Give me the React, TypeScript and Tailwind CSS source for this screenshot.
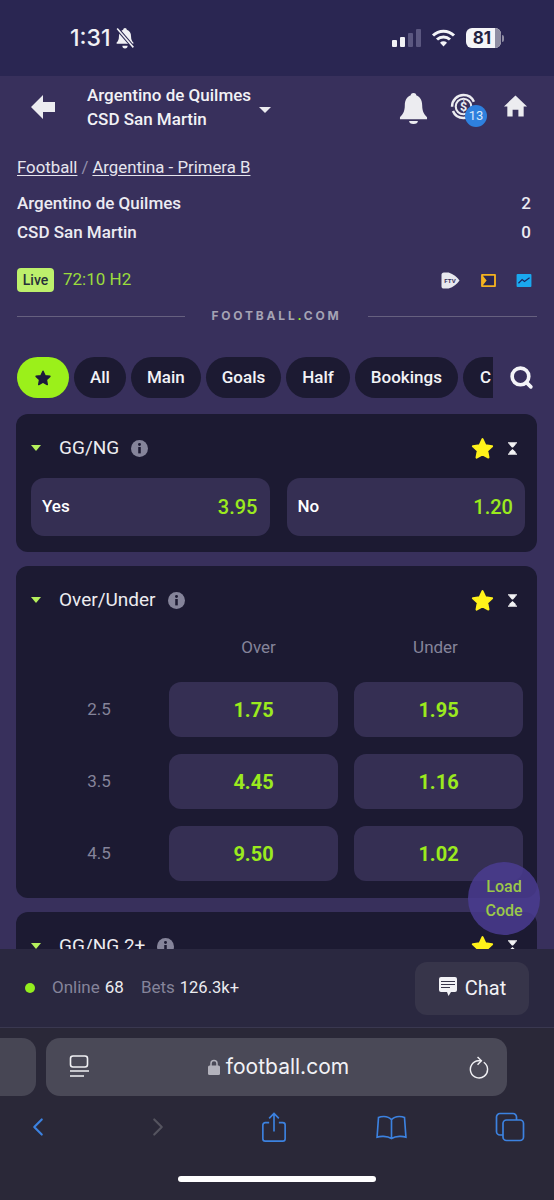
import React from 'react';
import { ChevronLeft, ChevronRight, Search } from 'lucide-react';

const tabs = ['All', 'Main', 'Goals', 'Half', 'Bookings'];

const rows = [
  { line: '2.5', over: '1.75', under: '1.95' },
  { line: '3.5', over: '4.45', under: '1.16' },
  { line: '4.5', over: '9.50', under: '1.02' },
];

const StarIcon = ({ className }: { className: string }) => (
  <svg viewBox="0 0 24 24" className={className} fill="currentColor" stroke="currentColor" strokeWidth="2" strokeLinejoin="round">
    <path d="M12 3l2.8 6 6.4.8-4.7 4.4 1.2 6.5L12 17.5l-5.7 3.2 1.2-6.5L2.8 9.8 9.2 9z" />
  </svg>
);

const InfoIcon = () => (
  <svg viewBox="0 0 16 16" className="w-[17px] h-[17px] shrink-0">
    <circle cx="8" cy="8" r="8" fill="#85849a" />
    <rect x="6.8" y="6.6" width="2.4" height="6" fill="#1c1a32" />
    <circle cx="8" cy="4.3" r="1.4" fill="#1c1a32" />
  </svg>
);

const HourGlass = () => (
  <svg viewBox="0 0 10 14" className="w-[9px] h-[13px] shrink-0" fill="#f2f2f4">
    <path d="M0 0h10v1.500H8.600v1L5.600 6H4.400L1.400 2.500v-1H0z" />
    <path d="M5 7.500l3.600 3.500v1.500H10V14H0v-1.500h1.400V11z" />
  </svg>
);

const MarketHeader = ({ title }: { title: string }) => (
  <div className="flex items-center pl-[15px] pr-[18px] pt-[4px] h-[64px]">
    <span className="w-0 h-0 border-l-[5px] border-r-[5px] border-t-[6px] border-l-transparent border-r-transparent border-t-[#b5f05c]" />
    <span className="ml-[18px] text-[19px] text-[#ececf0]">{title}</span>
    <span className="ml-[12px]"><InfoIcon /></span>
    <StarIcon className="ml-auto w-[25px] h-[25px] text-[#fff21a]" />
    <span className="ml-[13px] mr-[2px]"><HourGlass /></span>
  </div>
);

const OddButton = ({ value }: { value: string }) => (
  <button className="flex-1 h-[55px] rounded-[12px] bg-[#352f53] text-[20px] font-bold text-[#9bea1e]">{value}</button>
);

const App: React.FC = () => {
  return (
    <div className="relative flex flex-col w-[554px] h-[1200px] overflow-hidden bg-[#38305c] text-white font-['Roboto',sans-serif]">
      {/* phone status bar */}
      <div className="flex items-center h-[76px] shrink-0 bg-[#2a2652] pl-[70px] pr-[50px]">
        <span className="text-[23px] font-medium leading-none font-['Inter',sans-serif] text-[#f1f1f5]">1:31</span>
        <svg viewBox="0 0 20 22" className="w-[22px] h-[23px] ml-[3px]" fill="#f1f1f5">
          <path d="M10 1c1 0 1.600.7 1.700 1.600 2.800.8 4.100 3.200 4.100 6.400 0 3 .8 4.300 2.200 5.800v1.200H2v-1.200C3.400 13.300 4.200 12 4.200 9c0-3.200 1.300-5.600 4.100-6.400C8.400 1.700 9 1 10 1zM7.500 18h5a2.500 2.500 0 0 1-5 0z" />
          <path d="M2.500 1.500l15.500 18" stroke="#2a2652" strokeWidth="3.5" />
          <path d="M2.500 1.500l15.500 18" stroke="#f1f1f5" strokeWidth="1.5" />
        </svg>
        <div className="ml-auto flex items-end gap-[3px] h-[18px]">
          <span className="w-[5px] h-[7px] rounded-[1px] bg-[#f1f1f5]" />
          <span className="w-[5px] h-[10px] rounded-[1px] bg-[#f1f1f5]" />
          <span className="w-[5px] h-[14px] rounded-[1px] bg-[#5b5780]" />
          <span className="w-[5px] h-[18px] rounded-[1px] bg-[#5b5780]" />
        </div>
        <svg viewBox="0 0 24 18" className="w-[25px] h-[18px] ml-[10px]" fill="none" stroke="#f4f4f8" strokeWidth="3">
          <path d="M1.500 6.500a15 15 0 0 1 21 0" />
          <path d="M5.500 10.500a9.500 9.500 0 0 1 13 0" />
          <path d="M12 17.500l-3.500-3.700a5 5 0 0 1 7 0z" fill="#f4f4f8" stroke="none" />
        </svg>
        <div className="ml-[10px] flex items-center">
          <div className="relative flex items-center justify-center w-[35px] h-5 rounded-[6px] overflow-hidden bg-[#f4f4f8]">
            <span className="absolute right-0 top-0 bottom-0 w-[6px] bg-[#8f8da3]" />
            <span className="relative text-[17px] font-bold leading-none pr-[3px] font-['Inter',sans-serif] text-[#23213f]">81</span>
          </div>
          <span className="w-[2px] h-[7px] ml-[1px] rounded-r-sm bg-[#8f8da3]" />
        </div>
      </div>

      {/* match header */}
      <div className="flex items-center h-[63px] shrink-0 pl-[30px] pr-[26px]">
        <svg viewBox="0 0 26 26" className="w-[26px] h-[26px] mb-[2px]" fill="#ececf0">
          <path d="M13 1v7h12v10H13v7L1 13z" />
        </svg>
        <div className="ml-[31px] mb-[2px] w-[172px] text-[17px] font-medium leading-[24px] text-[#f2f2f6]">
          <div>Argentino de Quilmes</div>
          <div>CSD San Martin</div>
        </div>
        <span className="mt-[4px] w-0 h-0 border-l-[6px] border-r-[6px] border-t-[6px] border-l-transparent border-r-transparent border-t-[#ececf0]" />
        <svg viewBox="0 0 30 34" className="ml-auto mt-[2px] w-[29px] h-[33px]" fill="#ececf0">
          <circle cx="15" cy="4" r="3" />
          <path d="M15 3c6 0 9 4.500 9 11 0 6 2 9 5 12v2H1v-2c3-3 5-6 5-12C6 7.500 9 3 15 3z" />
          <path d="M10.500 30h9a4.500 3 0 0 1-9 0z" />
        </svg>
        <div className="relative ml-[22px] mb-[2px] w-[27px] h-[27px]">
          <svg viewBox="0 0 26 26" className="w-[27px] h-[27px]" fill="none" stroke="#ececf0">
            <circle cx="13" cy="13" r="11" strokeWidth="2.4" strokeDasharray="30 4" />
            <circle cx="13" cy="13" r="7.5" strokeWidth="2" />
            <text x="13" y="17.500" textAnchor="middle" fontSize="12" fontWeight="700" fill="#ececf0" stroke="none">$</text>
          </svg>
          <span className="absolute left-[15px] top-[12px] flex items-center justify-center w-[22px] h-[22px] rounded-full bg-[#2e80de] text-[13px] text-[#d8e8fa]">13</span>
        </div>
        <svg viewBox="0 0 26 24" className="ml-[26px] mb-[3px] w-[25px] h-[24px]" fill="#ececf0">
          <path d="M13 1L1 12.500h3.500V23H10v-7h6v7h5.500V12.500H25z" />
        </svg>
      </div>

      {/* page body */}
      <div className="flex-1 min-h-0 overflow-hidden px-[17px]">
        <div className="mt-[16px] text-[16.8px] leading-[24px] text-[#e6e5ee]">
          <span className="underline underline-offset-2">Football</span>
          <span className="mx-[4px] text-[#9491ad]">/</span>
          <span className="underline underline-offset-2">Argentina - Primera B</span>
        </div>
        <div className="mt-[10px] text-[17px] font-medium leading-[29px] text-[#ecebf2]">
          <div className="flex justify-between pr-[6px]"><span>Argentino de Quilmes</span><span>2</span></div>
          <div className="flex justify-between pr-[6px]"><span>CSD San Martin</span><span>0</span></div>
        </div>
        <div className="flex items-center mt-[21px] h-[24px]">
          <span className="flex items-center justify-center w-[37px] h-[24px] rounded-[4px] bg-[#bdf06c] text-[14px] font-medium text-[#26303a]">Live</span>
          <span className="ml-[9px] text-[17px] text-[#9bdc3c]">72:10 H2</span>
          <svg viewBox="0 0 20 20" className="ml-auto w-[19px] h-[19px]">
            <path d="M3 1.500h5c5 1.500 9 5 11.500 8.500C17 13.500 13 17 8 18.500H3c-1.500 0-2.500-1-2.500-2.500V4C.5 2.500 1.500 1.500 3 1.500z" fill="#e8e8ee" />
            <text x="9.500" y="12.500" textAnchor="middle" fontSize="6.500" fontWeight="700" fill="#38305c">FTV</text>
          </svg>
          <svg viewBox="0 0 16 14" className="ml-[21px] w-[15px] h-[13px]">
            <rect width="16" height="14" rx="1" fill="#f5b21f" />
            <path d="M2 2h12v10H2l4-5z" fill="#2a2652" />
          </svg>
          <svg viewBox="0 0 16 14" className="ml-[20px] mr-[5px] w-[16px] h-[13px]">
            <rect width="16" height="14" rx="1" fill="#1aa8ef" />
            <path d="M2 10l4-4 2.500 2L14 4" stroke="#1c2660" strokeWidth="1.3" fill="none" />
          </svg>
        </div>
        <div className="flex items-center mt-[12px] h-[24px]">
          <div className="w-[168px] h-[1px] bg-[#66607f]" />
          <div className="flex-1 text-center text-[12px] font-bold tracking-[2.8px] font-['Inter',sans-serif] text-[#a5a3b4]">
            FOOTBALL<span className="text-[#9bea1e]">.</span>COM
          </div>
          <div className="w-[169px] h-[1px] bg-[#66607f]" />
        </div>

        {/* market tabs */}
        <div className="flex items-center mt-[29px] h-[41px]">
          <div className="flex flex-1 min-w-0 gap-[5px] overflow-hidden">
            <button className="flex items-center justify-center shrink-0 w-[52px] h-[41px] rounded-full bg-[#9bf01a]">
              <StarIcon className="w-[18px] h-[18px] text-[#1c1a3c]" />
            </button>
            {tabs.map(tab => (
              <button key={tab} className="shrink-0 h-[41px] px-[16px] rounded-full bg-[#1c1a32] text-[17px] font-medium text-[#f2f2f6]">{tab}</button>
            ))}
            <button className="flex-1 min-w-0 h-[41px] pl-[17px] rounded-l-full bg-[#1c1a32] text-left text-[17px] font-medium text-[#f2f2f6]">C</button>
          </div>
          <Search className="ml-[16px] mr-[3px] w-[25px] h-[25px] text-[#f4f4f8]" strokeWidth={3.5} />
        </div>

        {/* markets */}
        <div className="-ml-px mt-[16px] flex flex-col gap-[14px]">
          <div className="rounded-[12px] bg-[#1c1a32] h-[138px]">
            <MarketHeader title="GG/NG" />
            <div className="flex gap-[17px] pl-[15px] pr-[12px]">
              <button className="flex items-center justify-between flex-1 h-[58px] pl-[11px] pr-[12px] rounded-[13px] bg-[#352f53]">
                <span className="text-[17px] font-medium text-white">Yes</span>
                <span className="text-[20px] font-medium text-[#9bea1e]">3.95</span>
              </button>
              <button className="flex items-center justify-between flex-1 h-[58px] pl-[11px] pr-[12px] rounded-[13px] bg-[#352f53]">
                <span className="text-[17px] font-medium text-white">No</span>
                <span className="text-[20px] font-medium text-[#9bea1e]">1.20</span>
              </button>
            </div>
          </div>

          <div className="rounded-[12px] bg-[#1c1a32] h-[332px]">
            <MarketHeader title="Over/Under" />
            <div className="mt-[4px] grid grid-cols-[123px_169px_169px] gap-x-[16px] pl-[14px] text-[17px] text-[#85849a]">
              <span />
              <span className="h-[26px] leading-[26px] text-center pl-[10px]">Over</span>
              <span className="h-[26px] leading-[26px] text-center pr-[6px]">Under</span>
            </div>
            <div className="mt-[22px] flex flex-col gap-[17px] pr-[14px]">
              {rows.map(row => (
                <div key={row.line} className="flex items-center">
                  <span className="w-[166px] text-center text-[17px] text-[#85849a]">{row.line}</span>
                  <div className="flex flex-1 gap-[16px] ml-[-13px]">
                    <OddButton value={row.over} />
                    <OddButton value={row.under} />
                  </div>
                </div>
              ))}
            </div>
          </div>

          <div className="rounded-[12px] bg-[#1c1a32] h-[138px]">
            <MarketHeader title="GG/NG 2+" />
          </div>
        </div>
      </div>

      {/* floating load code button */}
      <button className="absolute left-[468px] top-[862px] w-[72px] h-[73px] rounded-full bg-[#4a3c90]/85 text-[16px] leading-[24px] font-medium text-[#9bc84a]">
        Load<br />Code
      </button>

      {/* online stats and chat */}
      <div className="flex items-center h-[79px] shrink-0 pl-[25px] pr-[25px] bg-[#2a2840] border-b border-[#3a3850]">
        <span className="w-[10px] h-[10px] rounded-full bg-[#93ee1e]" />
        <span className="ml-[17px] text-[17px] text-[#85849a]">Online</span>
        <span className="ml-[5px] text-[17px] text-[#ececf0]">68</span>
        <span className="ml-[17px] text-[17px] text-[#85849a]">Bets</span>
        <span className="ml-[5px] text-[16.5px] text-[#ececf0]">126.3k+</span>
        <button className="ml-auto flex items-center justify-center gap-[7px] w-[114px] h-[53px] rounded-[12px] bg-[#37354a] text-[20px] text-[#f2f2f6]">
          <svg viewBox="0 0 20 22" className="w-[20px] h-[22px] -mt-[3px]">
            <path d="M3 1h14a2 2 0 0 1 2 2v11a2 2 0 0 1-2 2h-4l-2.500 4-1.500-4H3a2 2 0 0 1-2-2V3a2 2 0 0 1 2-2z" fill="#f2f2f6" />
            <path d="M3 5.500h14M3 8.500h14M3 11.500h9" stroke="#37354a" strokeWidth="1.2" />
          </svg>
          Chat
        </button>
      </div>

      {/* safari toolbar */}
      <div className="shrink-0 h-[172px] bg-[#2a2838]">
        <div className="flex gap-[10px] mt-[10px] h-[58px]">
          <div className="w-[36px] h-[58px] rounded-r-[14px] bg-[#474654]" />
          <div className="flex items-center justify-between w-[461px] h-[58px] pl-[23px] pr-[18px] rounded-[14px] bg-[#4a4957]">
            <svg viewBox="0 0 20 24" className="w-[20px] h-[24px]" fill="none" stroke="#f0f0f4" strokeWidth="1.6">
              <rect x="1.500" y="1" width="17" height="11" rx="2.500" />
              <path d="M1 16h19M1 21h14" />
            </svg>
            <div className="flex items-center gap-[6px]">
              <svg viewBox="0 0 12 16" className="w-[12px] h-[16px]">
                <path d="M3 7V4.500a3 3 0 0 1 6 0V7" fill="none" stroke="#b3b2bc" strokeWidth="1.5" />
                <rect y="6.500" width="12" height="9.500" rx="1.500" fill="#b3b2bc" />
              </svg>
              <span className="text-[21px] font-['Inter',sans-serif] text-[#f2f2f6]">football.com</span>
            </div>
            <svg viewBox="0 0 22 24" className="w-[21px] h-[23px]" fill="none" stroke="#f0f0f4" strokeWidth="1.5">
              <path d="M16.500 6.500A9 9 0 1 1 11 5h3" />
              <path d="M10 1l4 4-4 4" />
            </svg>
          </div>
        </div>
        <div className="flex items-center h-[46px] mt-[8px] pl-[23px]">
          <ChevronLeft className="w-[30px] h-[30px] text-[#3c82e0]" strokeWidth={1.7} />
          <ChevronRight className="ml-[90px] w-[30px] h-[30px] text-[#55545f]" strokeWidth={1.7} />
          <svg viewBox="0 0 26 32" className="ml-[88px] w-[26px] h-[31px]" fill="none" stroke="#3c82e0" strokeWidth="1.7">
            <path d="M8 11H4a2.500 2.500 0 0 0-2.500 2.500v14A2.500 2.500 0 0 0 4 30h18a2.500 2.500 0 0 0 2.500-2.500v-14A2.500 2.500 0 0 0 22 11h-4" />
            <path d="M13 20V2M8 6.500L13 1.500l5 5" />
          </svg>
          <svg viewBox="0 0 32 26" className="ml-[89px] w-[31px] h-[25px]" fill="none" stroke="#3c82e0" strokeWidth="1.7">
            <path d="M16 5c-2-2.500-5-3.500-8-3.500-2 0-4 .3-5.500 1L1 23c3-1 10-1.500 15 1.500C21 21.500 28 22 31 23L29.500 2.500C28 1.800 26 1.500 24 1.500 21 1.500 18 2.500 16 5zM16 5v19" />
          </svg>
          <svg viewBox="0 0 30 30" className="ml-[88px] w-[30px] h-[30px]" fill="none" stroke="#3c82e0" strokeWidth="1.7">
            <path d="M8 23H5a3.500 3.500 0 0 1-3.500-3.500V5A3.500 3.500 0 0 1 5 1.500h13A3.500 3.500 0 0 1 21.500 5v3" />
            <rect x="8" y="8" width="20.500" height="20.500" rx="3.500" />
          </svg>
        </div>
        <div className="mx-auto mt-[26px] w-[198px] h-[6px] rounded-full bg-white" />
      </div>
    </div>
  );
};

export default App;
